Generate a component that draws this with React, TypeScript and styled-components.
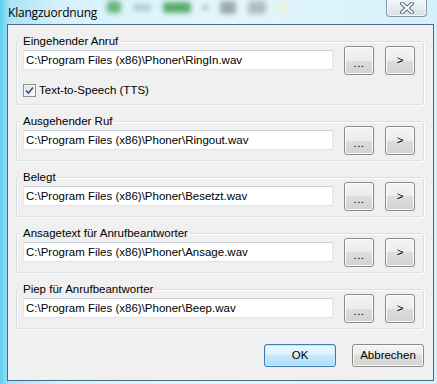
import styled, { createGlobalStyle } from "styled-components";

const GlobalStyle = createGlobalStyle`
  html, body {
    margin: 0;
    padding: 0;
    background: #ffffff;
  }
  body {
    font-family: "Liberation Sans", Arial, sans-serif;
    font-size: 11.5px;
    color: #000;
  }
`;

const Frame = styled.div`
  width: 437px;
  height: 384px;
  display: flex;
  flex-direction: column;
  background: linear-gradient(
    to right,
    #5ecff3 0px,
    #a9e3f6 10px,
    #d6f1fb 60px,
    #e4f6fc 220px,
    #d4f0fa 437px
  );
  overflow: hidden;
`;

const TitleBar = styled.div`
  height: 25px;
  display: flex;
  align-items: flex-start;
  padding-left: 8px;
`;

const Title = styled.div`
  font-family: "Open Sans", "Noto Sans", sans-serif;
  font-size: 12px;
  line-height: 16px;
  margin-top: 5px;
  color: #000;
  letter-spacing: -0.2px;
`;

const GlassIcons = styled.div`
  display: flex;
  align-items: center;
  gap: 12px;
  margin-left: 10px;
  height: 14px;
  filter: blur(2.5px);
  opacity: 0.8;
`;

const Blob = styled.span<{ $w: number; $h: number; $c: string }>`
  display: block;
  width: ${(p) => p.$w}px;
  height: ${(p) => p.$h}px;
  border-radius: 3px;
  background: ${(p) => p.$c};
`;

const Spacer = styled.div`
  flex: 1;
`;

const CloseButton = styled.div`
  width: 39px;
  height: 17px;
  margin-right: 10px;
  margin-top: -1px;
  border: 1px solid #8796a6;
  border-top: none;
  border-radius: 0 0 4px 4px;
  background: linear-gradient(#f4f8fb, #e3ebf1 55%, #d6e0e8);
  box-shadow: inset 0 0 0 1px rgba(255, 255, 255, 0.7);
  display: flex;
  align-items: center;
  justify-content: center;
`;

const Client = styled.div`
  margin: 0 3px 3px 7px;
  height: 354px;
  border: 1px solid #4a6a82;
  background: #f0f0f0;
  display: flex;
  flex-direction: column;
  padding: 16px 9px 0 8px;
`;

const Groups = styled.div`
  display: flex;
  flex-direction: column;
  gap: 16px;
`;

const Group = styled.div<{ $extra?: boolean }>`
  border: 1px solid #d5dfe5;
  border-radius: 3px;
  box-shadow: inset 1px 1px 0 #fff, 1px 1px 0 #fff;
  display: flex;
  flex-direction: column;
  padding: 0 8px ${(p) => (p.$extra ? 7 : 5)}px 6px;
`;

const GroupTitle = styled.span`
  align-self: flex-start;
  margin: -7px 0 -2px -2px;
  padding: 0 2px;
  line-height: 13px;
  background: #f0f0f0;
  white-space: nowrap;
`;

const Row = styled.div`
  height: 29px;
  display: flex;
  align-items: center;
  gap: 11px;
`;

const PathField = styled.input`
  width: 310px;
  height: 20px;
  box-sizing: border-box;
  margin: 0;
  padding: 0 2px;
  border: 1px solid #dfe4ea;
  border-top-color: #c9ced6;
  background: #fff;
  font-family: "Liberation Sans", Arial, sans-serif;
  font-size: 11.5px;
  color: #000;
  outline: none;
`;

const Button = styled.button<{ $w?: number; $h?: number; $default?: boolean }>`
  width: ${(p) => p.$w ?? 30}px;
  height: ${(p) => p.$h ?? 29}px;
  box-sizing: border-box;
  margin: 0;
  padding: 0;
  border: 1px solid ${(p) => (p.$default ? "#3c7fb1" : "#8a8a8a")};
  border-radius: 3px;
  background: ${(p) =>
    p.$default
      ? "linear-gradient(#ecf7fd 0%, #dcf1fc 50%, #c4e8fc 50%, #b0dcf5 100%)"
      : "linear-gradient(#f4f4f4 0%, #ececec 50%, #dedede 50%, #d2d2d2 100%)"};
  box-shadow: inset 0 0 0 1px ${(p) => (p.$default ? "#c3e6f9" : "#fbfbfb")};
  font-family: "Liberation Sans", Arial, sans-serif;
  font-size: 11.5px;
  color: #000;
  display: flex;
  align-items: center;
  justify-content: center;
`;

const Dots = styled.span`
  margin-top: 5px;
  letter-spacing: 0.5px;
`;

const CheckRow = styled.label`
  display: flex;
  align-items: center;
  gap: 3px;
  margin-top: 9px;
  height: 13px;
  line-height: 13px;
`;

const CheckBox = styled.span`
  width: 13px;
  height: 13px;
  box-sizing: border-box;
  border: 1px solid #8e8f8f;
  background: linear-gradient(135deg, #dcdcdc, #f4f4f4 70%, #ffffff);
  box-shadow: inset 0 0 0 1px #f4f4f4;
  display: flex;
  align-items: center;
  justify-content: center;
`;

const Footer = styled.div`
  display: flex;
  justify-content: flex-end;
  gap: 16px;
  margin-top: 15px;
`;

const files = [
  { title: "Eingehender Anruf", path: "C:\\Program Files (x86)\\Phoner\\RingIn.wav", tts: true },
  { title: "Ausgehender Ruf", path: "C:\\Program Files (x86)\\Phoner\\Ringout.wav" },
  { title: "Belegt", path: "C:\\Program Files (x86)\\Phoner\\Besetzt.wav" },
  { title: "Ansagetext für Anrufbeantworter", path: "C:\\Program Files (x86)\\Phoner\\Ansage.wav" },
  { title: "Piep für Anrufbeantworter", path: "C:\\Program Files (x86)\\Phoner\\Beep.wav" },
];

const CloseIcon = () => (
  <svg width="16" height="12" viewBox="0 0 16 12">
    <path d="M3 1.5 L13 10.5 M13 1.5 L3 10.5" stroke="#5d6b78" strokeWidth="4" strokeLinecap="round" />
    <path d="M3 1.5 L13 10.5 M13 1.5 L3 10.5" stroke="#ffffff" strokeWidth="2" strokeLinecap="round" />
  </svg>
);

const CheckMark = () => (
  <svg width="9" height="9" viewBox="0 0 9 9">
    <path d="M1 4.5 L3.5 7 L8 1.5" fill="none" stroke="#3b4f8a" strokeWidth="1.7" />
  </svg>
);

export default function App() {
  return (
    <>
      <GlobalStyle />
      <Frame>
        <TitleBar>
          <Title>Klangzuordnung</Title>
          <GlassIcons>
            <Blob $w={14} $h={12} $c="#4aa85a" />
            <Blob $w={18} $h={7} $c="#a9c0cd" />
            <Blob $w={28} $h={11} $c="#3c9a4a" />
            <Blob $w={5} $h={5} $c="#8797a2" />
            <Blob $w={16} $h={13} $c="#8a979f" />
            <Blob $w={18} $h={13} $c="#a3aeb5" />
            <Blob $w={10} $h={12} $c="#eef3d8" />
          </GlassIcons>
          <Spacer />
          <CloseButton>
            <CloseIcon />
          </CloseButton>
        </TitleBar>
        <Client>
          <Groups>
            {files.map((f) => (
              <Group key={f.title} $extra={f.tts}>
                <GroupTitle>{f.title}</GroupTitle>
                <Row>
                  <PathField readOnly value={f.path} />
                  <Button>
                    <Dots>...</Dots>
                  </Button>
                  <Button>&gt;</Button>
                </Row>
                {f.tts && (
                  <CheckRow>
                    <CheckBox>
                      <CheckMark />
                    </CheckBox>
                    Text-to-Speech (TTS)
                  </CheckRow>
                )}
              </Group>
            ))}
          </Groups>
          <Footer>
            <Button $w={72} $h={23} $default>
              OK
            </Button>
            <Button $w={72} $h={23}>
              Abbrechen
            </Button>
          </Footer>
        </Client>
      </Frame>
    </>
  );
}
